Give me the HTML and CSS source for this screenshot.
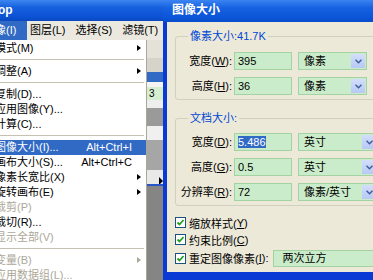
FILE: index.html
```html
<html>
	<head>
		<meta charset="UTF-8"/>
		<link rel="stylesheet" href="styles.css">
	</head>
	<body>
		<div class="screen">
			<div class="app">
				<div class="titlebar"><span class="apptitle">op</span></div>
				<div class="menubar">
					<span class="mb hi">像(I)</span>
					<span class="mb">图层(<u>L</u>)</span>
					<span class="mb">选择(<u>S</u>)</span>
					<span class="mb">滤镜(<u>T</u>)</span>
				</div>
				<div class="work">
					<div class="st s1"></div>
					<div class="st s2"></div>
					<div class="st s3"></div>
					<div class="st s4"></div>
					<div class="st s5">3</div>
					<div class="st s6"></div>
					<div class="st s7"></div>
					<div class="st s8"></div>
					<div class="st s9"></div>
					<div class="st s10"><span class="tri"></span></div>
					<div class="st s11"></div>
					<div class="st s12"></div>
				</div>
			</div>

			<div class="menu">
				<div class="item sub"><span class="lbl">模式(M)</span><span class="arr"></span></div>
				<div class="sep"></div>
				<div class="item sub"><span class="lbl">调整(A)</span><span class="arr"></span></div>
				<div class="sep"></div>
				<div class="item"><span class="lbl">复制(D)...</span><span class="arr"></span></div>
				<div class="item"><span class="lbl">应用图像(Y)...</span><span class="arr"></span></div>
				<div class="item"><span class="lbl">计算(C)...</span><span class="arr"></span></div>
				<div class="sep"></div>
				<div class="item active"><span class="lbl">图像大小(I)...</span><span class="key">Alt+Ctrl+I</span><span class="arr"></span></div>
				<div class="item"><span class="lbl">画布大小(S)...</span><span class="key">Alt+Ctrl+C</span><span class="arr"></span></div>
				<div class="item sub"><span class="lbl">像素长宽比(X)</span><span class="arr"></span></div>
				<div class="item sub"><span class="lbl">旋转画布(E)</span><span class="arr"></span></div>
				<div class="item off"><span class="lbl">裁剪(P)</span><span class="arr"></span></div>
				<div class="item"><span class="lbl">裁切(R)...</span><span class="arr"></span></div>
				<div class="item off"><span class="lbl">显示全部(V)</span><span class="arr"></span></div>
				<div class="sep"></div>
				<div class="item off sub"><span class="lbl">变量(B)</span><span class="arr"></span></div>
				<div class="item off"><span class="lbl">应用数据组(L)...</span><span class="arr"></span></div>
			</div>

			<div class="dialog">
				<div class="dlgtitle">图像大小</div>
				<div class="dlgbody">
					<fieldset class="group">
						<legend>像素大小:41.7K</legend>
						<div class="rows">
							<span class="rl">宽度(<u>W</u>):</span>
							<div class="inp">395</div>
							<div class="sel"><span class="st-txt">像素</span><span class="btn"><svg width="7" height="5" viewBox="0 0 7 5"><polyline points="0.5,0.8 3.5,3.8 6.5,0.8" fill="none" stroke="#3f5f9f" stroke-width="1.5"/></svg></span></div>
							<span class="tick"></span>
							<span class="rl">高度(<u>H</u>):</span>
							<div class="inp">36</div>
							<div class="sel"><span class="st-txt">像素</span><span class="btn"><svg width="7" height="5" viewBox="0 0 7 5"><polyline points="0.5,0.8 3.5,3.8 6.5,0.8" fill="none" stroke="#3f5f9f" stroke-width="1.5"/></svg></span></div>
							<span class="tick"></span>
						</div>
					</fieldset>
					<fieldset class="group g2">
						<legend>文档大小:</legend>
						<div class="rows">
							<span class="rl">宽度(<u>D</u>):</span>
							<div class="inp"><span class="selected">5.486</span></div>
							<div class="sel wide"><span class="st-txt">英寸</span><span class="btn"><svg width="7" height="5" viewBox="0 0 7 5"><polyline points="0.5,0.8 3.5,3.8 6.5,0.8" fill="none" stroke="#3f5f9f" stroke-width="1.5"/></svg></span></div>
							<span></span>
							<span class="rl">高度(<u>G</u>):</span>
							<div class="inp">0.5</div>
							<div class="sel wide"><span class="st-txt">英寸</span><span class="btn"><svg width="7" height="5" viewBox="0 0 7 5"><polyline points="0.5,0.8 3.5,3.8 6.5,0.8" fill="none" stroke="#3f5f9f" stroke-width="1.5"/></svg></span></div>
							<span></span>
							<span class="rl">分辨率(<u>R</u>):</span>
							<div class="inp">72</div>
							<div class="sel wide"><span class="st-txt">像素/英寸</span><span class="btn"><svg width="7" height="5" viewBox="0 0 7 5"><polyline points="0.5,0.8 3.5,3.8 6.5,0.8" fill="none" stroke="#3f5f9f" stroke-width="1.5"/></svg></span></div>
							<span></span>
						</div>
					</fieldset>
					<div class="checks">
						<div class="chk"><span class="box"><svg width="9" height="9" viewBox="0 0 9 9"><polyline points="1.5,4.5 3.5,6.5 7.5,2" fill="none" stroke="#21a121" stroke-width="1.8"/></svg></span>缩放样式(<u>Y</u>)</div>
						<div class="chk"><span class="box"><svg width="9" height="9" viewBox="0 0 9 9"><polyline points="1.5,4.5 3.5,6.5 7.5,2" fill="none" stroke="#21a121" stroke-width="1.8"/></svg></span>约束比例(<u>C</u>)</div>
						<div class="chk last"><span class="box"><svg width="9" height="9" viewBox="0 0 9 9"><polyline points="1.5,4.5 3.5,6.5 7.5,2" fill="none" stroke="#21a121" stroke-width="1.8"/></svg></span>重定图像像素(<u>I</u>):<div class="sel big"><span class="st-txt">两次立方</span></div></div>
					</div>
				</div>
			</div>
		</div>
	</body>
</html>
```

FILE: styles.css
```css
body{
	margin:0;
}
.screen{
	position:relative;
	width:373px;
	height:280px;
	overflow:hidden;
	font-family:"Liberation Sans","Noto Sans CJK SC",sans-serif;
	font-size:11px;
	color:#000;
	background:#8a8a8a;
}
.app{
	display:flex;
	flex-direction:column;
	height:280px;
}
.titlebar{
	height:21px;
	background:linear-gradient(#3d86f0,#1660de 35%,#0b52d4 80%,#0a48c0);
	color:#fff;
	font-weight:bold;
	font-size:12px;
	line-height:21px;
}
.apptitle{
	margin-left:-2px;
}
.menubar{
	height:19px;
	display:flex;
	align-items:stretch;
	background:#ebe9df;
	line-height:19px;
}
.mb{
	padding:0 4px;
	margin-right:2px;
}
.mb.hi{
	width:36px;
	box-sizing:border-box;
	margin-left:-9px;
	padding-left:4px;
	margin-right:0;
	background:#316ac5;
	color:#fff;
}
.mb:nth-child(2){
	padding-left:3px;
}
.mb u{
	text-decoration:none;
}
.work{
	flex:1;
	display:flex;
	flex-direction:column;
}
.st{
	flex:none;
}
.s1{height:18px;background:#e4e2d8;}
.s2{height:14px;background:#d6d4ca;}
.s3{height:10px;background:#316ac5;}
.s4{height:5px;background:#f4f4f2;}
.s5{height:13px;background:#d6eed0;font-size:10px;line-height:13px;padding-left:149px;}
.s6{height:8px;background:#eeeeee;}
.s7{height:18px;background:#9a9a9a;}
.s8{height:14px;background:#f0f0f0;}
.s9{height:30px;background:#a6a6a6;}
.s10{height:14px;background:#e9e9e9;padding-left:159px;box-sizing:border-box;padding-top:7px;}
.s11{height:2px;background:#2a55c8;}
.s12{flex:1;background:#858585;}
.tri{
	display:block;
	width:0;
	height:0;
	border-left:4px solid #000;
	border-top:4px solid transparent;
	border-bottom:4px solid transparent;
}

/* dropdown */
.menu{
	position:absolute;
	left:-8px;
	top:40px;
	width:154px;
	height:245px;
	padding-top:1px;
	background:#fff;
	border-right:1px solid #aca899;
}
.item{
	display:flex;
	height:15px;
	line-height:15px;
	padding-left:3px;
}
.item .lbl{
	flex:1;
	white-space:nowrap;
}
.item .key{
	white-space:nowrap;
}
.item .arr{
	width:14px;
	flex:none;
	position:relative;
}
.item.sub .arr:after{
	content:"";
	position:absolute;
	left:5px;
	top:4px;
	border-left:4px solid #000;
	border-top:3.5px solid transparent;
	border-bottom:3.5px solid transparent;
}
.item.off{
	color:#aca899;
}
.item.off.sub .arr:after{
	border-left-color:#aca899;
}
.item.active{
	background:#316ac5;
	color:#fff;
}
.sep{
	height:8px;
	position:relative;
}
.sep:after{
	content:"";
	position:absolute;
	left:2px;
	right:2px;
	top:3px;
	border-top:1px solid #c5c2b2;
}

/* dialog */
.dialog{
	position:absolute;
	left:163px;
	top:0;
	width:240px;
	height:280px;
	display:flex;
	flex-direction:column;
	background:#0a3ad6;
}
.dlgtitle{
	height:22px;
	line-height:21px;
	padding-left:9px;
	background:linear-gradient(#3b84f2,#1662e2 35%,#0b55d8 80%,#0a4ccb);
	color:#fff;
	font-weight:bold;
	font-size:12px;
}
.dlgbody{
	height:250px;
	box-sizing:border-box;
	margin-left:4px;
	padding:7px 0 0 8px;
	background:#ece9d8;
}
.group{
	margin:0;
	padding:9px 0 4px 0;
	width:230px;
	border:1px solid #d0d0bf;
	border-radius:3px;
}
.group legend{
	margin-left:12px;
	padding:0 2px;
	line-height:14px;
	color:#0046d5;
}
.g2{
	margin-top:11px;
	padding-top:8px;
}
.rows{
	display:grid;
	grid-template-columns:58px 64px 72px 6px;
	grid-auto-rows:18px;
	row-gap:7px;
	align-items:center;
}
.rl{
	text-align:right;
	padding-right:2px;
	white-space:nowrap;
	line-height:18px;
}
.inp{
	width:58px;
	height:18px;
	box-sizing:border-box;
	border:1px solid #a3d2a3;
	background:#cbecca;
	padding-left:3px;
	line-height:16px;
}
.selected{
	background:#316ac5;
	color:#fff;
}
.sel{
	width:69px;
	height:18px;
	box-sizing:border-box;
	border:1px solid #a3d2a3;
	background:#cbecca;
	display:flex;
	align-items:center;
	line-height:16px;
}
.sel.wide{
	width:80px;
}
.st-txt{
	flex:1;
	padding-left:5px;
	white-space:nowrap;
}
.btn{
	width:14px;
	height:14px;
	margin-right:1px;
	background:linear-gradient(#d3defa,#b7c9f4);
	display:flex;
	align-items:center;
	justify-content:center;
}
.tick{
	width:3px;
	height:1px;
	background:#333;
	justify-self:end;
}
.checks{
	margin-top:8px;
}
.chk{
	display:flex;
	align-items:center;
	height:17px;
	white-space:nowrap;
}
.chk.last{
	height:20px;
}
.box{
	width:11px;
	height:11px;
	box-sizing:border-box;
	border:1px solid #1c5180;
	background:#fff;
	margin-right:3px;
	display:flex;
	align-items:center;
	justify-content:center;
}
.sel.big{
	width:120px;
	height:17px;
	margin-left:5px;
}
.sel.big .st-txt{
	padding-left:8px;
}
```
